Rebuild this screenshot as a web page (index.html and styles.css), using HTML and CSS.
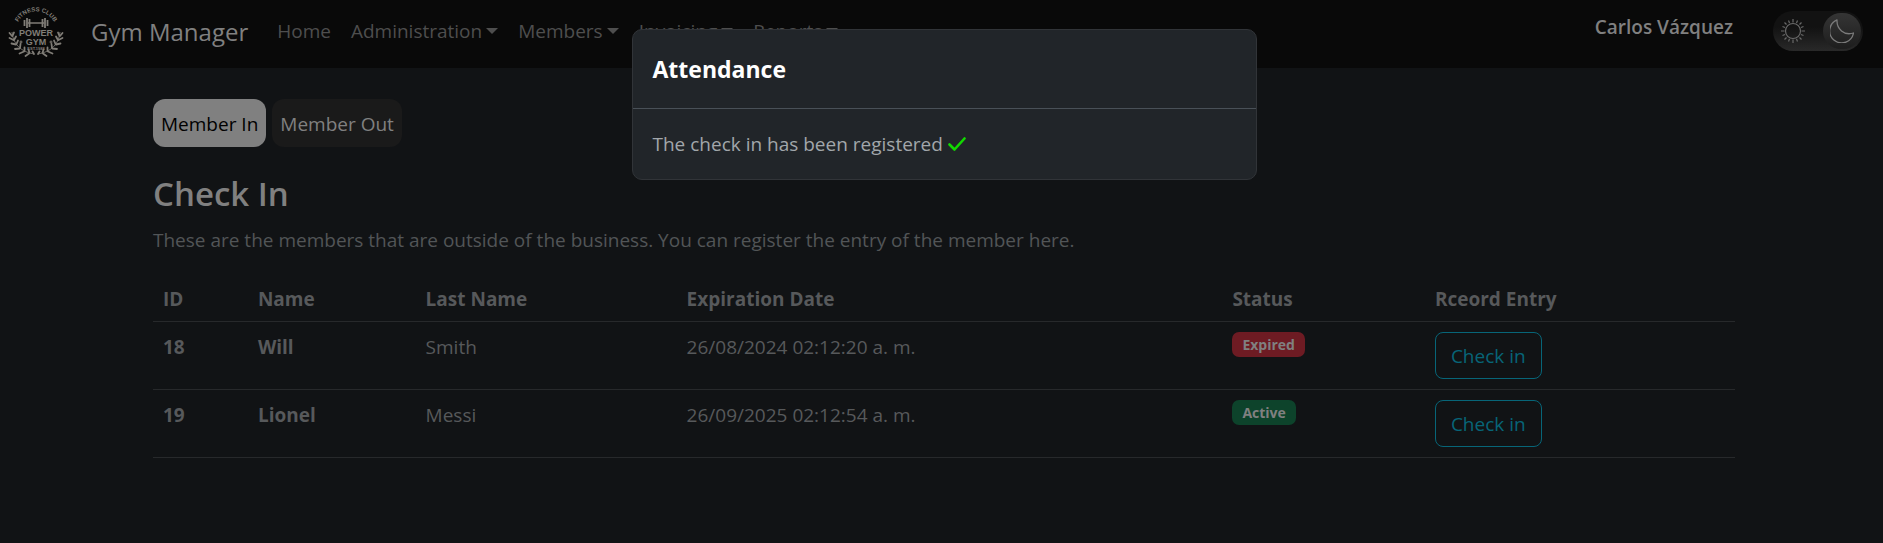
FILE: index.html
```html
<!DOCTYPE html>
<html lang="en">
<head>
<meta charset="utf-8">
<title>Gym Manager</title>
<link rel="stylesheet" href="styles.css">
</head>
<body>
<header class="navbar">
  <a class="logo" href="#" aria-label="Power Gym">
    <svg width="58" height="58" viewBox="0 0 58 58" fill="none" stroke="#807d77">
      <defs>
        <path id="arc" d="M10.500 21A20.500 20.500 0 0 1 47.500 21"/>
        <g id="leaves">
          <path d="M5 30C6 42 14 50 27 52" stroke-width=".8"/>
          <path d="M5 34L2.500 31M6.500 38L2.500 36M9 42.500L4.500 41.500M12.500 46.500L8 47M17 49.500L12.500 51.500M22 51.500L18.500 54M5.500 34L7 30.500M7 38L9 34.500M9.500 42L11 38.500M13 46L13.500 42M17.500 49L17.500 45.500M22.500 51L21.500 47.500M27 52L25.500 49.500" stroke-width="1.800" stroke-linecap="round"/>
        </g>
      </defs>
      <text class="logo-small" stroke="none"><textPath href="#arc" startOffset="50%" text-anchor="middle">FITNESS CLUB</textPath></text>
      <path d="M21 21h16" stroke-width="1.500"/>
      <path d="M17.500 18v6M20 16v10M22.500 17v8M35.500 17v8M38 16v10M40.500 18v6" stroke-width="1.800"/>
      <text class="logo-word" stroke="none" x="29" y="34" text-anchor="middle">POWER</text>
      <text class="logo-word" stroke="none" x="29" y="43" text-anchor="middle">GYM</text>
      <path d="M12.500 40h3M14 38.500v3M42.500 40h3M44 38.500v3" stroke-width="1"/>
      <text class="logo-est" stroke="none" x="29" y="48" text-anchor="middle">EST.1988</text>
      <use href="#leaves"/>
      <use href="#leaves" transform="translate(58 0)scale(-1 1)"/>
    </svg>
  </a>
  <a class="brand" href="#">Gym Manager</a>
  <nav class="menu">
    <a class="menu-link" href="#">Home</a>
    <a class="menu-link has-caret" href="#">Administration</a>
    <a class="menu-link has-caret" href="#">Members</a>
    <a class="menu-link has-caret" href="#">Invoicing</a>
    <a class="menu-link has-caret" href="#">Reports</a>
  </nav>
  <strong class="user">Carlos Vázquez</strong>
  <label class="theme">
    <input class="theme-input" type="checkbox" checked aria-label="Dark theme">
    <svg class="icon" width="24" height="24" viewBox="0 0 24 24" fill="none" stroke="#696969">
      <circle cx="12" cy="12" r="7.500" stroke-width="1.200"/>
      <path d="M12 0v3.500M12 20.500V24M0 12h3.500M20.500 12H24M3.500 3.500l2 2M18.500 18.500l2 2M3.500 20.500l2-2M18.500 5.500l2-2M7.500 1.500l1 2.500M15.500 20l1 2.500M1.500 7.500l2.500 1M20 15.500l2.500 1M1.500 16.500l2.500-1M20 8.500l2.500-1M7.500 22.500l1-2.500M15.500 4l1-2.500" stroke-width="1.200"/>
    </svg>
    <span class="knob">
      <svg class="icon" width="24" height="24" viewBox="0 0 24 24" fill="none" stroke="#7b7b7b" stroke-width="1.300" stroke-linejoin="round">
        <path d="M7 .8A12 12 0 1 0 23.500 14C14 17 6.500 10 7 .8Z"/>
      </svg>
    </span>
  </label>
</header>
<main class="page">
  <div class="tabs">
    <button class="tab active" type="button">Member In</button>
    <button class="tab" type="button">Member Out</button>
  </div>
  <h1 class="heading">Check In</h1>
  <p class="lead">These are the members that are outside of the business. You can register the entry of the member here.</p>
  <table class="members">
    <colgroup><col class="c-id"><col class="c-name"><col class="c-last"><col class="c-date"><col class="c-status"><col></colgroup>
    <thead>
      <tr><th>ID</th><th>Name</th><th>Last Name</th><th>Expiration Date</th><th>Status</th><th>Rceord Entry</th></tr>
    </thead>
    <tbody>
      <tr><th>18</th><th>Will</th><td>Smith</td><td>26/08/2024 02:12:20 a. m.</td><td><span class="badge expired">Expired</span></td><td><button class="check" type="button">Check in</button></td></tr>
      <tr><th>19</th><th>Lionel</th><td>Messi</td><td>26/09/2025 02:12:54 a. m.</td><td><span class="badge ok">Active</span></td><td><button class="check" type="button">Check in</button></td></tr>
    </tbody>
  </table>
</main>
<section class="modal" role="dialog" aria-labelledby="modal-title">
  <h2 class="modal-title" id="modal-title">Attendance</h2>
  <p class="modal-body">The check in has been registered
    <svg width="18" height="14" viewBox="0 0 18 14" fill="none" stroke="#12d900" stroke-width="2.600" stroke-linecap="round" stroke-linejoin="round"><path d="M1.500 7.500l5 5L16.500 1.500"/></svg>
  </p>
</section>
</body>
</html>
```
FILE: styles.css
```css
* { box-sizing: border-box; }
body {
  margin: 0;
  min-height: 100vh;
  background: #111315;
  color: #6f7274;
  font: 19px/30px "Open Sans", "Noto Sans", sans-serif;
}
button { font: inherit; cursor: pointer; }
a { color: inherit; text-decoration: none; }

.navbar {
  display: flex;
  align-items: center;
  height: 68px;
  padding: 0 20px 6px 7px;
  background: #090909;
}
.logo { display: flex; }
.logo text { fill: #807d77; font-family: "Liberation Sans", Arial, sans-serif; font-weight: 700; }
.logo-small { font-size: 6px; }
.logo-word { font-size: 9px; }
.logo-est { font-size: 4px; }
.brand { margin: 2px 19px 0 26px; color: #808080; font-size: 24px; }
.menu { display: flex; flex: 1; }
.menu-link { padding: 0 10px; color: #4e4e4e; }
.has-caret::after {
  content: "";
  display: inline-block;
  margin-left: 4px;
  vertical-align: 4px;
  border: 6px solid transparent;
  border-top-color: currentColor;
  border-bottom: 0;
}
.user { margin: 0 40px 8px 0; color: #808080; font-weight: 600; }
.theme {
  display: flex;
  align-items: center;
  justify-content: space-between;
  width: 90px;
  height: 40px;
  padding: 0 2px 0 8px;
  border-radius: 20px;
  background: linear-gradient(#121212, #121212 40%, #292929);
}
.theme-input { position: absolute; opacity: 0; }
.knob {
  display: flex;
  align-items: center;
  justify-content: center;
  width: 38px;
  height: 36px;
  border-radius: 18px;
  background: linear-gradient(#353535, #1d1d1d);
}

.page { padding: 31px 148px 0 153px; }
.tabs { display: flex; gap: 6px; }
.tab {
  height: 48px;
  padding: 2px 8px 0;
  border: 0;
  border-radius: 12px;
  background: #1a1a1a;
  color: #808080;
}
.tab.active { background: #808080; color: #000; }
.heading { margin: 26px 0 10px; color: #808080; font-size: 33px; line-height: 42px; font-weight: 600; }
.lead { margin: 0 0 19px; color: #525557; }
.members { width: 100%; border-collapse: collapse; table-layout: fixed; color: #57595b; text-align: left; }
.members th, .members td { padding: 10px; border-bottom: 1px solid #27292b; vertical-align: top; }
.members thead th { padding-bottom: 7px; }
.members th { font-weight: 700; }
.c-id { width: 6%; }
.c-name { width: 10.600%; }
.c-last { width: 16.500%; }
.c-date { width: 34.500%; }
.c-status { width: 12.800%; }
.badge {
  display: block;
  width: fit-content;
  padding: 0 10px;
  border-radius: 7px;
  color: #808080;
  font-size: 14px;
  line-height: 25px;
  font-weight: 700;
}
.expired { background: #6e1b23; }
.ok { background: #0d432b; }
.check {
  display: block;
  height: 47px;
  padding: 0 15px;
  border: 1px solid #076578;
  border-radius: 8px;
  background: transparent;
  color: #076578;
}

.modal {
  position: absolute;
  top: 29px;
  left: 50%;
  width: 625px;
  margin-left: -310px;
  border: 1px solid #313438;
  border-radius: 10px;
  background: #212529;
}
.modal-title {
  margin: 0;
  padding: 20px;
  border-bottom: 1px solid #495057;
  color: #fff;
  font-size: 23px;
  line-height: 38px;
  font-weight: 700;
}
.modal-body { margin: 0; padding: 20px; color: #a2a7ab; }
```
